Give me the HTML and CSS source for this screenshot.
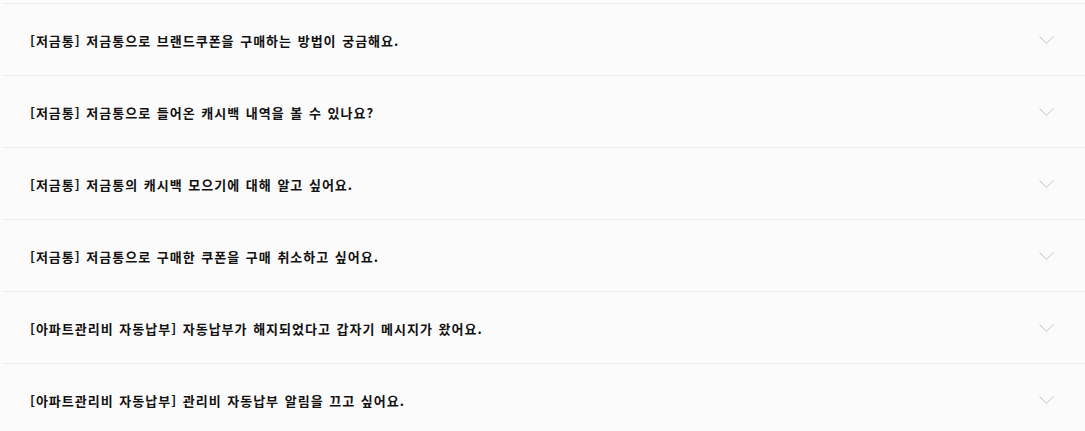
FILE: index.html
```html
<!DOCTYPE html>
<html lang="ko">
<head>
    <meta charset="UTF-8">
    <title>자주 묻는 질문</title>
    <link rel="stylesheet" href="styles.css">
</head>
<body>
    <ul class="faq-list">
        <li class="faq-item">
            <span class="faq-q">[저금통] 저금통으로 브랜드쿠폰을 구매하는 방법이 궁금해요.</span>
            <svg class="faq-arrow" width="15" height="9" viewBox="0 0 15 9"><path d="M0.5 0.5 L7.5 7.5 L14.5 0.5" fill="none" stroke="#c4c4c4" stroke-width="1"/></svg>
        </li>
        <li class="faq-item">
            <span class="faq-q">[저금통] 저금통으로 들어온 캐시백 내역을 볼 수 있나요?</span>
            <svg class="faq-arrow" width="15" height="9" viewBox="0 0 15 9"><path d="M0.5 0.5 L7.5 7.5 L14.5 0.5" fill="none" stroke="#c4c4c4" stroke-width="1"/></svg>
        </li>
        <li class="faq-item">
            <span class="faq-q">[저금통] 저금통의 캐시백 모으기에 대해 알고 싶어요.</span>
            <svg class="faq-arrow" width="15" height="9" viewBox="0 0 15 9"><path d="M0.5 0.5 L7.5 7.5 L14.5 0.5" fill="none" stroke="#c4c4c4" stroke-width="1"/></svg>
        </li>
        <li class="faq-item">
            <span class="faq-q">[저금통] 저금통으로 구매한 쿠폰을 구매 취소하고 싶어요.</span>
            <svg class="faq-arrow" width="15" height="9" viewBox="0 0 15 9"><path d="M0.5 0.5 L7.5 7.5 L14.5 0.5" fill="none" stroke="#c4c4c4" stroke-width="1"/></svg>
        </li>
        <li class="faq-item">
            <span class="faq-q">[아파트관리비 자동납부] 자동납부가 해지되었다고 갑자기 메시지가 왔어요.</span>
            <svg class="faq-arrow" width="15" height="9" viewBox="0 0 15 9"><path d="M0.5 0.5 L7.5 7.5 L14.5 0.5" fill="none" stroke="#c4c4c4" stroke-width="1"/></svg>
        </li>
        <li class="faq-item">
            <span class="faq-q">[아파트관리비 자동납부] 관리비 자동납부 알림을 끄고 싶어요.</span>
            <svg class="faq-arrow" width="15" height="9" viewBox="0 0 15 9"><path d="M0.5 0.5 L7.5 7.5 L14.5 0.5" fill="none" stroke="#c4c4c4" stroke-width="1"/></svg>
        </li>
    </ul>
</body>
</html>
```

FILE: styles.css
```css
body {
    margin: 0;
    padding: 3px 0 0 4px;
    background: #fbfbfc;
    font-family: "Noto Sans CJK KR", "Noto Sans", sans-serif;
    overflow: hidden;
}

.faq-list {
    list-style: none;
    margin: 0;
    padding: 0;
}

.faq-item {
    display: flex;
    align-items: center;
    justify-content: space-between;
    height: 71px;
    border-top: 1px solid #ebebeb;
    padding: 0 31px 0 26px;
}

.faq-q {
    font-size: 13px;
    font-weight: 700;
    color: #111;
    letter-spacing: 1px;
    word-spacing: 1px;
    margin-top: 2px;
}

.faq-arrow {
    display: block;
    margin-top: 1px;
}
```
